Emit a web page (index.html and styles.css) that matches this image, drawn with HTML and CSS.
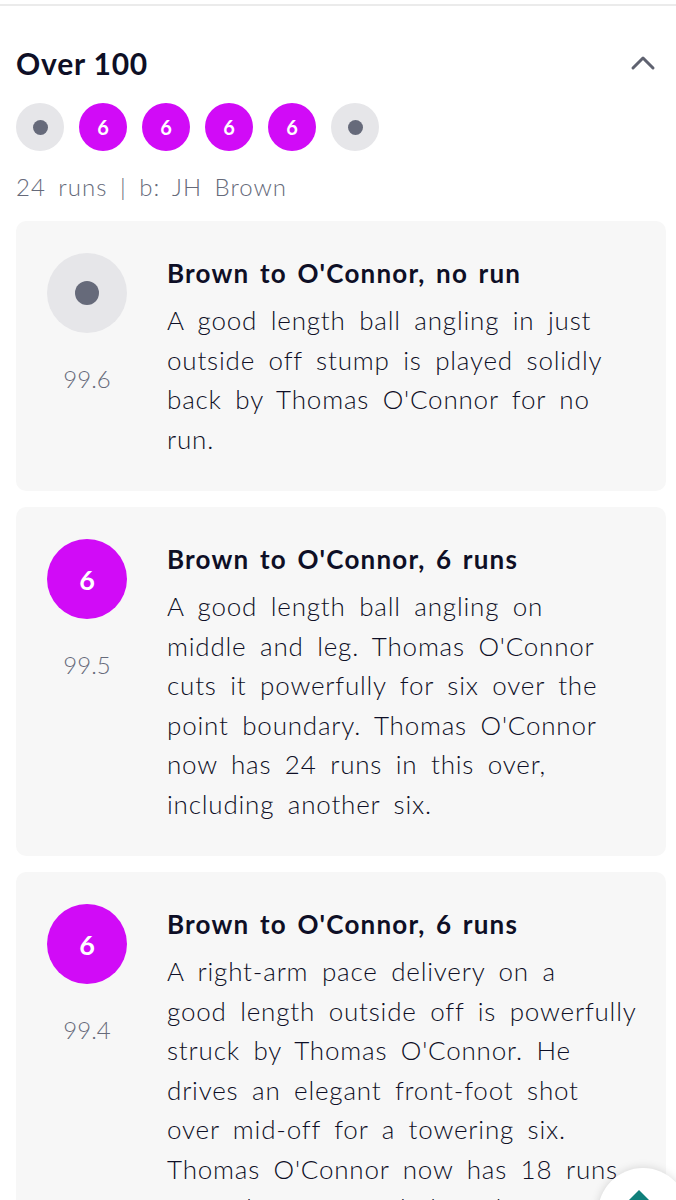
FILE: index.html
```html
<!DOCTYPE html>
<html>
<head>
<meta charset="utf-8">
<link rel="stylesheet" href="styles.css">
</head>
<body>
<div class="divider"></div>
<section class="over">
  <div class="over-head">
    <h2 class="over-title">Over 100</h2>
    <svg class="chev" width="26" height="16" viewBox="0 0 26 16"><path d="M3 13 L13 3 L23 13" fill="none" stroke="#5f6270" stroke-width="3" stroke-linecap="round" stroke-linejoin="round"/></svg>
  </div>
  <div class="balls">
    <span class="ball dot"><i></i></span>
    <span class="ball six">6</span>
    <span class="ball six">6</span>
    <span class="ball six">6</span>
    <span class="ball six">6</span>
    <span class="ball dot"><i></i></span>
  </div>
  <p class="summary">24 runs | b: JH Brown</p>

  <div class="card">
    <div class="side">
      <span class="big dot"><i></i></span>
      <span class="num">99.6</span>
    </div>
    <div class="text">
      <h3 class="ct">Brown to O'Connor, no run</h3>
      <p class="cb">A good length ball angling in just outside off stump is played solidly back by Thomas O'Connor for no run.</p>
    </div>
  </div>

  <div class="card">
    <div class="side">
      <span class="big six">6</span>
      <span class="num">99.5</span>
    </div>
    <div class="text">
      <h3 class="ct">Brown to O'Connor, 6 runs</h3>
      <p class="cb">A good length ball angling on <span class="nw">middle and</span> leg. Thomas O'Connor cuts it powerfully for six over the point boundary. Thomas O'Connor now has 24 runs in this over, including another six.</p>
    </div>
  </div>

  <div class="card">
    <div class="side">
      <span class="big six">6</span>
      <span class="num">99.4</span>
    </div>
    <div class="text">
      <h3 class="ct">Brown to O'Connor, 6 runs</h3>
      <p class="cb">A right-arm pace delivery on a <span class="nw">good length</span> outside off is powerfully struck by Thomas O'Connor. He drives an elegant front-foot shot over mid-off for a towering six. Thomas O'Connor now has 18 runs from this over, including three sixes.</p>
    </div>
  </div>
</section>
<button class="fab"><svg width="30" height="20" viewBox="0 0 30 20"><path d="M15 2 L28 15 L2 15 Z" fill="#0f7f7a"/></svg></button>
</body>
</html>
```
FILE: styles.css
```css
html, body { margin: 0; padding: 0; background: #fff; }
body {
  font-family: "Lato", "Noto Sans", sans-serif;
  color: #0e0f26;
  width: 676px;
  overflow: hidden;
}
.divider { height: 2px; background: #ebebeb; margin-top: 4px; }
.over { padding: 0 10px 40px 16px; }
.over-head {
  display: flex; align-items: center; justify-content: space-between;
  margin-top: 37px;
}
.over-title { margin: 0; font-size: 30px; line-height: 40px; font-weight: 700; letter-spacing: 0.8px; }
.chev { margin-right: 10px; }
.balls { display: flex; gap: 15px; margin-top: 20px; }
.ball {
  width: 48px; height: 48px; border-radius: 50%;
  display: flex; align-items: center; justify-content: center;
  font-weight: 700; font-size: 20px; color: #fff;
}
.dot { background: #e6e6e9; }
.dot i { display: block; width: 15px; height: 15px; border-radius: 50%; background: #666a7a; }
.six { background: #d10bf7; }
.summary { margin: 20px 0 0; font-size: 24px; line-height: 32px; color: #666a7a; font-weight: 300; letter-spacing: 1px; word-spacing: 5px; }
.card {
  margin-top: 18px;
  background: #f7f7f7;
  border-radius: 10px;
  padding: 32px 26px 32px 31px;
  display: flex; gap: 40px;
}
.card + .card { margin-top: 16px; }
.side { width: 80px; flex: none; display: flex; flex-direction: column; align-items: center; }
.big {
  width: 80px; height: 80px; border-radius: 50%;
  display: flex; align-items: center; justify-content: center;
  color: #fff; font-weight: 700; font-size: 27px;
}
.big.dot i { width: 24px; height: 24px; }
.num { margin-top: 32px; font-size: 24px; line-height: 28px; color: #666a7a; font-weight: 300; letter-spacing: 0; }
.text { flex: 1; }
.ct { margin: 1px 0 8px; font-size: 26px; line-height: 39px; font-weight: 700; letter-spacing: 1.2px; word-spacing: 3px; }
.cb { margin: 0; font-size: 26px; line-height: 39.5px; font-weight: 300; letter-spacing: 0.8px; word-spacing: 5.7px; }
.nw { white-space: nowrap; }
.fab {
  position: fixed; left: 598px; top: 1168px;
  width: 90px; height: 90px; border-radius: 50%;
  background: #fff; border: none; padding: 20px 0 0;
  box-shadow: 0 0 10px rgba(0,0,0,0.15);
  display: flex; justify-content: center; align-items: flex-start;
}
.fab svg { margin-left: -8px; }
```
